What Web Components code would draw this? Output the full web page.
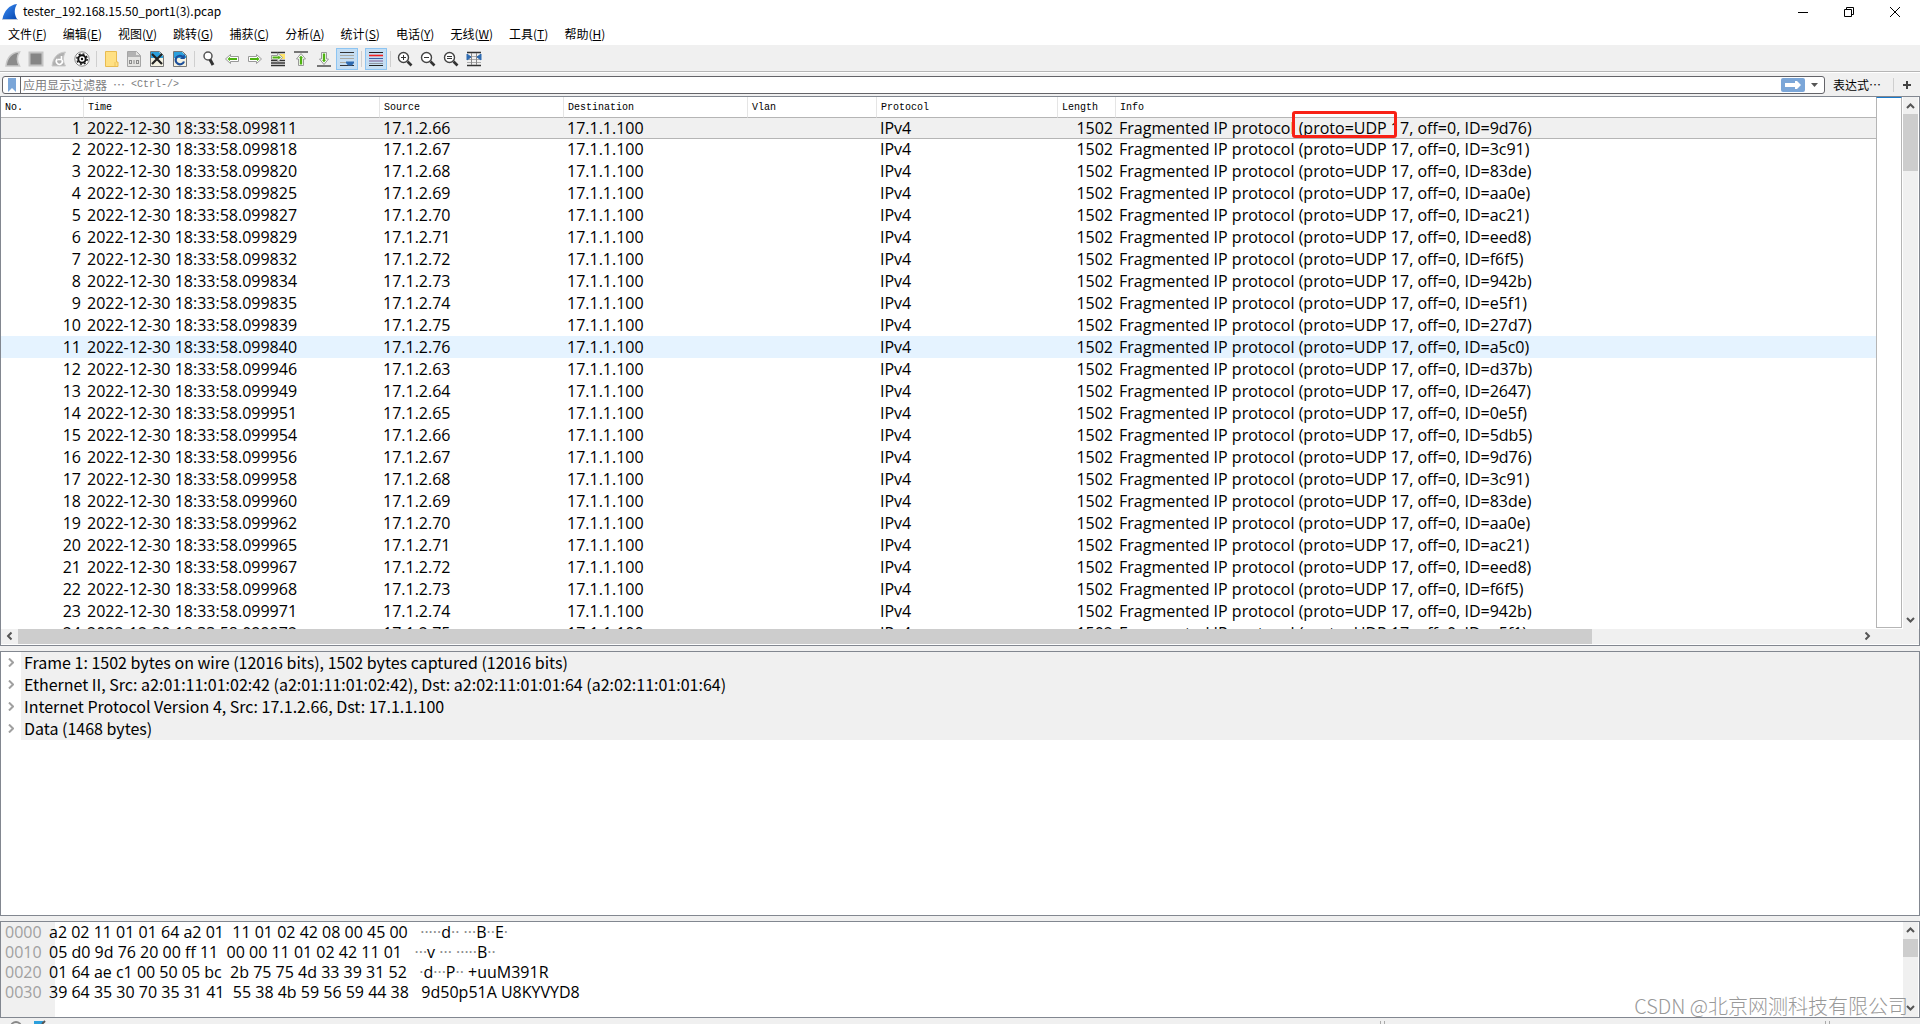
<!DOCTYPE html>
<html lang="zh-CN">
<head>
<meta charset="utf-8">
<title>tester_192.168.15.50_port1(3).pcap</title>
<style>
  html, body { height: 100%; margin: 0; }
  body { background: #f0f0f0; color: #000; font: 12px/16px "Noto Sans CJK SC", sans-serif; overflow: hidden; }
</style>
</head>
<body>
<capture-app></capture-app>
<script>
const define = (name, html, setup) => {
  const t = document.createElement('template');
  t.innerHTML = html;
  customElements.define(name, class extends HTMLElement {
    constructor() {
      super();
      this.attachShadow({ mode: 'open' }).append(t.content.cloneNode(true));
    }
    connectedCallback() { if (setup && !this.ready) { this.ready = true; setup(this.shadowRoot, this); } }
  });
};

define('title-bar', `
<style>
  :host { display: flex; align-items: center; height: 24px; background: #fff; padding: 0 2px; }
  h1 { flex: 1; margin: 0; padding: 0 0 2px 5px; font: inherit; }
  button { width: 46px; height: 24px; margin: 0; padding: 0; border: 0; background: none; display: grid; place-items: center; }
</style>
<svg width="16" height="16" viewBox="0 0 16 16"><defs><linearGradient id="g" x1="0" y1="0" x2="1" y2="1"><stop offset="0" stop-color="#3d8ff5"/><stop offset="1" stop-color="#0747b0"/></linearGradient></defs><path d="M.5 15C2 7 7 1 15 0C12 5 12 10 15 15Z" fill="url(#g)"/><path d="M0 15.5H16" stroke="#bcc7d8"/></svg>
<h1>tester_192.168.15.50_port1(3).pcap</h1>
<button aria-label="最小化"><svg width="10" height="10"><path d="M0 5.5H10" stroke="#000"/></svg></button>
<button aria-label="还原"><svg width="10" height="10" fill="none" stroke="#000"><path d="M.5 2.5H7.5V9.5H.5ZM2.5 2V.5H9.5V7.5H8"/></svg></button>
<button aria-label="关闭"><svg width="10" height="10"><path d="M0 0L10 10M10 0L0 10" stroke="#000"/></svg></button>
`);

define('menu-bar', `
<style>
  :host { display: block; background: #fff; border-bottom: 1px solid #f0f0f0; }
  nav { display: flex; height: 21px; }
  button { border: 0; margin: 0; padding: 0 8px 2px; background: none; font: inherit; line-height: 19px; height: 21px; color: inherit; }
</style>
<nav></nav>
`, root => {
  const nav = root.querySelector('nav');
  [['文件','F'],['编辑','E'],['视图','V'],['跳转','G'],['捕获','C'],['分析','A'],['统计','S'],['电话','Y'],['无线','W'],['工具','T'],['帮助','H']]
    .forEach(([t, k]) => nav.insertAdjacentHTML('beforeend', `<button>${t}(<u>${k}</u>)</button>`));
});

const lens = inner => `<circle cx="6.5" cy="6.5" r="5" fill="#fff" stroke="#444" stroke-width="1.4"/><path d="M10.5 10.5L14.5 14.5" stroke="#333" stroke-width="2.6"/><path d="${inner}" stroke="#333"/>`;
const arrow = t => `<g transform="${t}"><path d="M1.5 8L6.5 3.5V5.5H14.5V10.5H6.5V12.5Z" fill="#fff" stroke="#999"/><path d="M3.5 8L6 5.8V7H13V9H6V10.2Z" fill="#4fb312"/></g>`;
const docBlue = inner => `<path d="M1.5 .5H10.5L14.5 4.5V15.5H1.5Z" fill="#f4f2e2" stroke="#777"/><path d="M2 1H10L14 5V7H2Z" fill="#2b9fdc"/>${inner}`;
const ICONS = {
  start: ['开始捕获', `<path d="M1 15C2 7 6 1.5 14.5 1C12 5 11.5 10 14.5 15Z" fill="#8b8b8b" stroke="#c8c8c8" stroke-width="1.5"/>`],
  stop: ['停止捕获', `<rect x="1.5" y="1.5" width="13" height="13" fill="#858585" stroke="#c4c4c4" stroke-width="2"/>`],
  restart: ['重新开始', `<path d="M1 15C2 7 6 1.5 14.5 1C12 5 11.5 10 14.5 15Z" fill="#b0b0b0" stroke="#c9c9c9"/><path d="M6.5 8A3 3 0 1 0 11 9M10.5 5V8.5H7" fill="none" stroke="#fff" stroke-width="1.6"/>`],
  options: ['捕获选项', `<circle cx="8" cy="8" r="7.2" fill="#fff" stroke="#888"/><circle cx="8" cy="8" r="3.7" fill="none" stroke="#111" stroke-width="2"/><circle cx="8" cy="8" r="5.2" fill="none" stroke="#111" stroke-width="1.4" stroke-dasharray="2 2.08"/><circle cx="8" cy="8" r="1.2" fill="#111"/>`],
  open: ['打开', `<path d="M2.5 .5H13.5V11H15V15.5H2.5Z" fill="#ffe083" stroke="#e8bb50"/><path d="M12 11V15" stroke="#edc45c"/>`],
  save: ['保存', `<path d="M1.5 .5H10.5L14.5 4.5V15.5H1.5Z" fill="#e4e4e2" stroke="#a5a5a5"/><path d="M2 1H10V4H14V6H2Z" fill="#b2b2b2"/><g fill="none" stroke="#8b8b8b"><rect x="3.5" y="9.5" width="2" height="3"/><path d="M8 9V13"/><rect x="10.5" y="9.5" width="2" height="3"/></g>`],
  close: ['关闭文件', docBlue(`<path d="M3 3L13 13M13 3L3 13" stroke="#222" stroke-width="2.2"/>`)],
  reload: ['重新加载', docBlue(`<path d="M11 6A4.3 4.3 0 1 0 12 10.5" fill="none" stroke="#1c4f9c" stroke-width="2.2"/><path d="M12.8 3V8H8Z" fill="#1c4f9c"/>`)],
  find: ['查找', `<circle cx="7" cy="5" r="4" fill="#fff" stroke="#555" stroke-width="1.5"/><path d="M9 8.5L12 14" stroke="#333" stroke-width="3"/>`],
  back: ['后退', arrow('')],
  forward: ['前进', arrow('rotate(180 8 8)')],
  goto: ['转到', `<path d="M1 1.5H15M1 9.5H15M1 12H15M1 14.5H15" stroke="#333" stroke-width="1.3"/><rect x="10" y="3" width="5" height="5" fill="#ffe46b"/><path d="M1.5 4.5H7.5V2L12.5 6.5L7.5 11V8.5H1.5Z" fill="#fff" stroke="#999"/><path d="M2.5 5.6H8.3V4.5L11 6.5L8.3 8.5V7.4H2.5Z" fill="#4fb312"/>`],
  first: ['首个分组', `<path d="M1 1H15" stroke="#333" stroke-width="1.3"/><path d="M8 2.5L12.5 8H10.5V14.5H5.5V8H3.5Z" fill="#fff" stroke="#999"/><path d="M8 4.5L10 7H9.2V13.5H6.8V7H6Z" fill="#4fb312"/>`],
  last: ['最新分组', `<path d="M1 15H15" stroke="#333" stroke-width="1.3"/><path d="M8 13.5L12.5 8H10.5V1.5H5.5V8H3.5Z" fill="#fff" stroke="#999"/><path d="M8 11.5L10 9H9.2V2.5H6.8V9H6Z" fill="#4fb312"/>`],
  auto: ['自动滚动', `<path d="M1 1.5H15M1 14.5H15" stroke="#333"/><path d="M1 4.5H15M1 7.5H15M1 11.5H8" stroke="#aaa9a0"/><path d="M7 10.5H15V12L13 14.5H9L7 12Z" fill="#2e6ab0"/>`],
  color: ['着色', `<path d="M1 1.5H15M1 14.5H15" stroke="#222"/><path d="M1 4.5H15" stroke="#f02020" stroke-width="1.6"/><path d="M1 7.5H15" stroke="#3d62a5"/><path d="M1 10H15" stroke="#7c5a91"/><path d="M1 12.5H15" stroke="#8e97a5"/>`],
  zin: ['放大', lens('M4 6.5H9M6.5 4V9')],
  zout: ['缩小', lens('M4 6.5H9')],
  z100: ['正常大小', lens('M4 5.5H9M4 7.5H9')],
  cols: ['调整列宽', `<path d="M1 1.5H15M1 14.5H15" stroke="#333" stroke-width="1.3"/><path d="M1 5.5H15M1 8.5H15M1 11.5H15" stroke="#aaa"/><path d="M5.5 2V14M10.5 2V14" stroke="#888"/><path d="M1 3L5 6L1 9ZM15 3L11 6L15 9Z" fill="#2e6ab0" stroke="#2e6ab0"/>`]
};

define('tool-bar', `
<style>
  :host { display: flex; align-items: center; gap: 1px; height: 24px; padding: 0 2px; margin-top: 1px; border-bottom: 1px solid #b5b5b5; }
  button { box-sizing: border-box; width: 22px; height: 22px; margin: 0; padding: 0; border: 1px solid transparent; background: none; display: grid; place-items: center; }
  button[aria-pressed] { background: #c5def3; border-color: #8cc4f2; }
  hr { width: 1px; height: 16px; margin: 0 2px; border: 0; background: #cfcfcf; }
</style>
`, root => {
  'start stop restart options | open save close reload | find back forward goto first last auto | color | zin zout z100 cols'.split(' ').forEach(k => {
    if (k === '|') return root.append(document.createElement('hr'));
    const b = document.createElement('button');
    b.ariaLabel = ICONS[k][0];
    if (k === 'auto' || k === 'color') b.setAttribute('aria-pressed', 'true');
    b.innerHTML = `<svg width="16" height="16" viewBox="0 0 16 16">${ICONS[k][1]}</svg>`;
    root.append(b);
  });
});

define('filter-bar', `
<style>
  :host { display: flex; align-items: center; height: 23px; padding: 0 9px 0 2px; border-top: 1px solid #fff; }
  .box { flex: 1; display: flex; align-items: center; box-sizing: border-box; height: 18px; border: 1px solid #646469; border-radius: 3px; background: #fff; }
  button { margin: 0; padding: 0; border: 0; background: none; font: inherit; color: inherit; display: grid; place-items: center; height: 16px; }
  .mark { width: 18px; border-right: 1px solid #646469; }
  .field { flex: 1; display: grid; align-items: center; }
  input, label { grid-area: 1 / 1; font: 12px/16px "Noto Sans CJK SC", sans-serif; }
  input { width: 100%; height: 16px; box-sizing: border-box; border: 0; padding: 0 3px; background: none; outline: 0; }
  label { padding-left: 2px; color: #80807f; display: flex; gap: 6px; pointer-events: none; }
  label b { font-weight: 400; }
  label span { font: 10px/16px "Liberation Mono", monospace; }
  .go { width: 24px; height: 14px; border-radius: 2px; background: #7ba6d8; }
  .drop { width: 19px; }
  .expr { padding: 0 0 0 8px; }
  hr { width: 1px; height: 14px; margin: 0 9px 0 12px; border: 0; background: #cfcfcf; }
</style>
<div class="box">
  <button class="mark" aria-label="书签"><svg width="8" height="14"><path d="M0 0H8V14L4 10L0 14Z" fill="#7ba6d8"/></svg></button>
  <div class="field"><label for="f">应用显示过滤器 <b>⋯</b> <span>&lt;Ctrl-/&gt;</span></label><input id="f" type="text"></div>
  <button class="go" aria-label="应用"><svg width="16" height="8"><path d="M0 2H10V0H12L16 4L12 8H10V6H0Z" fill="#fff"/></svg></button>
  <button class="drop" aria-label="历史"><svg width="7" height="4"><path d="M0 0H7L3.5 4Z" fill="#555"/></svg></button>
</div>
<button class="expr">表达式⋯</button><hr>
<button aria-label="添加"><svg width="8" height="8"><path d="M4 0V8M0 4H8" stroke="#444" stroke-width="2"/></svg></button>
`);

define('scroll-bar', `
<style>
  :host { display: flex; flex-direction: column; background: #f0f0f0; width: 15px; }
  :host([horizontal]) { flex-direction: row; width: auto; height: 15px; }
  button { flex: none; width: 15px; height: 17px; border: 0; margin: 0; padding: 0; background: none; display: grid; place-items: center; }
  :host([horizontal]) button { width: 17px; height: 15px; }
  .track { flex: 1; display: flex; flex-direction: inherit; }
  .thumb { background: #cdcdcd; flex: 0 0 var(--thumb); }
  svg { fill: none; stroke: #555; stroke-width: 2; }
  :host([horizontal]) svg { transform: rotate(-90deg); }
</style>
<button aria-label="后滚"><svg width="9" height="6"><path d="M1 5L4.5 1.5L8 5"/></svg></button>
<div class="track"><div class="thumb"></div></div>
<button aria-label="前滚"><svg width="9" height="6"><path d="M1 1L4.5 4.5L8 1"/></svg></button>
`);

define('packet-list', `
<style>
  :host { display: grid; grid-template: minmax(0, 1fr) 15px / minmax(0, 1fr) auto 17px; background: #fff; padding-bottom: 1px; }
  .view { overflow: hidden; }
  table { width: 100%; border-collapse: separate; border-spacing: 0; table-layout: fixed; }
  th { box-sizing: border-box; height: 21px; padding: 2px 4px 0; border-right: 1px solid #e5e5e5; border-bottom: 1px solid #b5b5b5; font: 10px/18px "Liberation Mono", monospace; text-align: left; color: #000; }
  th:last-child { border-right: 0; }
  td { box-sizing: border-box; height: 22px; padding: 0 3px; font: 16px/22px "Open Sans", sans-serif; white-space: nowrap; }
  td.n { text-align: right; }
  tr.sel td { height: 20px; line-height: 20px; background: #f0f0f0; }
  tr.sel + tr td { border-top: 1px solid #b5b5b5; line-height: 21px; }
  tr.hover td { background: #e5f3ff; }
  .map { width: 24px; border: 1px solid #b5b5b5; border-top: 1px solid #1979ca; margin-bottom: 1px; }
  scroll-bar { margin-left: 1px; margin-right: 1px; --thumb: 57px; }
  scroll-bar[horizontal] { margin: 0; --thumb: 85.5%; }
  .corner { grid-column: span 2; background: #f0f0f0; }
  .mark { position: relative; display: inline-block; }
  .mark::after { content: ""; position: absolute; left: -7px; right: -10px; top: -7px; height: 21px; border: 3px solid #f82116; border-radius: 3px; }
</style>
<div class="view"><table>
<colgroup><col style="width:83px"><col style="width:296px"><col style="width:184px"><col style="width:184px"><col style="width:129px"><col style="width:181px"><col style="width:58px"><col></colgroup>
<thead><tr><th>No.<th>Time<th>Source<th>Destination<th>Vlan<th>Protocol<th>Length<th>Info</tr></thead><tbody></tbody></table></div>
<div class="map"></div><scroll-bar></scroll-bar>
<scroll-bar horizontal></scroll-bar><div class="corner"></div>
`, root => {
  const times = '811 818 820 825 827 829 832 834 835 839 840 946 949 951 954 956 958 960 962 965 967 968 971 972'.split(' ');
  const hosts = [66,67,68,69,70,71,72,73,74,75,76,63,64,65,66,67,68,69,70,71,72,73,74,75];
  const ids = '9d76 3c91 83de aa0e ac21 eed8 f6f5 942b e5f1 27d7 a5c0 d37b 2647 0e5f 5db5 9d76 3c91 83de aa0e ac21 eed8 f6f5 942b e5f1'.split(' ');
  root.querySelector('tbody').innerHTML = times.map((t, i) => {
    const cls = i === 0 ? 'sel' : i === 10 ? 'hover' : '';
    const proto = i === 0 ? '<span class="mark">(proto=UDP</span>' : '(proto=UDP';
    return `<tr class="${cls}"><td class="n">${i + 1}</td><td>2022-12-30 18:33:58.099${t}</td><td>17.1.2.${hosts[i]}</td><td>17.1.1.100</td><td></td><td>IPv4</td><td class="n">1502</td><td>Fragmented IP protocol ${proto} 17, off=0, ID=${ids[i]})</td></tr>`;
  }).join('');
});

define('packet-details', `
<style>
  :host { display: block; background: #fff; overflow: hidden; font: 16px/21px "Noto Sans CJK SC", sans-serif; }
  ul { margin: 0; padding: 0; list-style: none; }
  li { display: flex; align-items: center; height: 22px; }
  button { width: 20px; height: 22px; border: 0; margin: 0; padding: 0; background: none; display: grid; place-items: center; }
  span { flex: 1; background: #f0f0f0; padding: 0 0 1px 3px; }
</style>
<ul></ul>
`, root => {
  ['Frame 1: 1502 bytes on wire (12016 bits), 1502 bytes captured (12016 bits)',
   'Ethernet II, Src: a2:01:11:01:02:42 (a2:01:11:01:02:42), Dst: a2:02:11:01:01:64 (a2:02:11:01:01:64)',
   'Internet Protocol Version 4, Src: 17.1.2.66, Dst: 17.1.1.100',
   'Data (1468 bytes)'].forEach(t => root.querySelector('ul').insertAdjacentHTML('beforeend',
    `<li><button aria-label="展开"><svg width="6" height="9"><path d="M1 .5L5 4.5L1 8.5" fill="none" stroke="#a0a0a0" stroke-width="2"/></svg></button><span>${t}</span></li>`));
});

define('packet-bytes', `
<style>
  :host { display: flex; background: #fff; overflow: hidden; font: 16px/20px "Open Sans", sans-serif; }
  .rows { flex: 1; background: linear-gradient(90deg, #f0f0f0 54px, #fff 54px); }
  .rows div { display: flex; white-space: pre; padding-left: 4px; }
  .off { color: #a0a0a0; width: 44px; }
  i { font-style: normal; color: #888; }
  scroll-bar { --thumb: 18px; margin-right: 1px; }
</style>
<div class="rows"></div><scroll-bar></scroll-bar>
`, root => {
  [['0000', 'a2 02 11 01 01 64 a2 01  11 01 02 42 08 00 45 00', '·····d·· ···B··E·'],
   ['0010', '05 d0 9d 76 20 00 ff 11  00 00 11 01 02 42 11 01', '···v ··· ·····B··'],
   ['0020', '01 64 ae c1 00 50 05 bc  2b 75 75 4d 33 39 31 52', '·d···P·· +uuM391R'],
   ['0030', '39 64 35 30 70 35 31 41  55 38 4b 59 56 59 44 38', '9d50p51A U8KYVYD8']]
  .forEach(([o, h, a]) => root.querySelector('.rows').insertAdjacentHTML('beforeend',
    `<div><span class="off">${o}</span><span>${h}   ${a.replace(/·+/g, '<i>$&</i>')}</span></div>`));
});

define('status-bar', `
<style>
  :host { display: flex; height: 6px; overflow: hidden; align-items: flex-end; gap: 12px; padding-left: 10px; }
  .grip { width: 3px; height: 3px; border: solid #a9a9a9; border-width: 0 1px; }
  .a { margin-left: auto; } .b { margin-left: 428px; margin-right: 90px; }
  svg { flex: none; }
</style>
<svg width="12" height="6"><circle cx="6" cy="9" r="5" fill="#eee" stroke="#888" stroke-width="2"/></svg>
<svg width="12" height="6"><path d="M0 3H9V6H0Z" fill="#2b9fdc"/><path d="M8 6L11 3" stroke="#555" stroke-width="2"/></svg>
<div class="grip a"></div><div class="grip b"></div>
`);

define('capture-app', `
<style>
  :host { display: flex; flex-direction: column; height: 100vh; }
  main { flex: 1; min-height: 0; display: grid; grid-template-rows: 549fr 265fr 97fr; gap: 5px; }
  main > * { border: 1px solid #828790; min-height: 0; box-sizing: border-box; }
  footer { position: absolute; right: 12px; bottom: 4px; font: 20px/28px "Noto Sans CJK SC", sans-serif; font-weight: 300; color: #999; }
</style>
<title-bar></title-bar><menu-bar></menu-bar><tool-bar></tool-bar><filter-bar></filter-bar>
<main><packet-list></packet-list><packet-details></packet-details><packet-bytes></packet-bytes></main>
<status-bar></status-bar>
<footer>CSDN @北京网测科技有限公司</footer>
`);
</script>
</body>
</html>
